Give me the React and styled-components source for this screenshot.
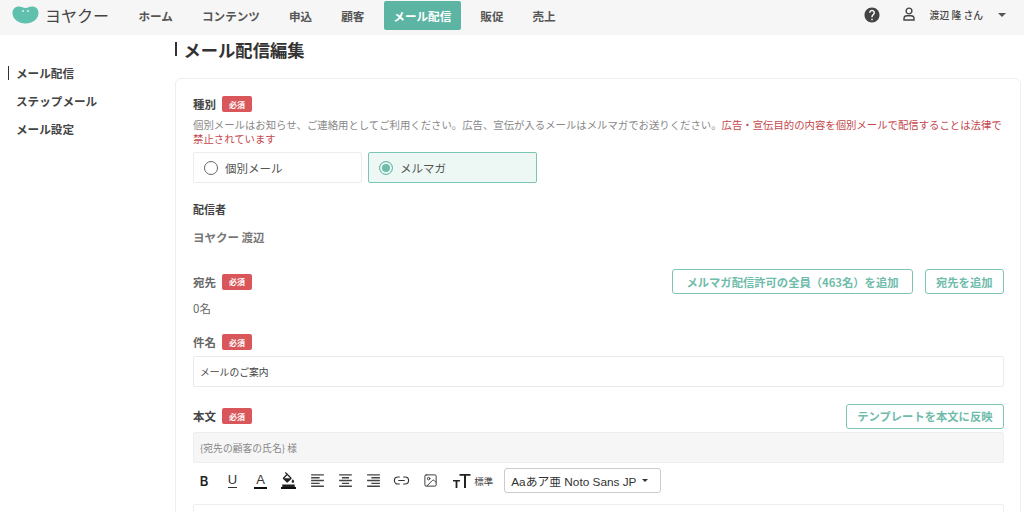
import React from "react";
import styled, { createGlobalStyle } from "styled-components";
import { MdHelp, MdFormatColorFill, MdFormatAlignLeft, MdFormatAlignCenter, MdFormatAlignRight } from "react-icons/md";
import { Link2, Image } from "lucide-react";

const GlobalStyle = createGlobalStyle`
  html, body {
    margin: 0;
    background: #fff;
  }
  body {
    font-family: "Noto Sans CJK JP", "Noto Sans", sans-serif;
    color: #333;
  }
  * { box-sizing: border-box; }
`;

const NAV = ["ホーム", "コンテンツ", "申込", "顧客", "メール配信", "販促", "売上"];
const SIDE = ["メール配信", "ステップメール", "メール設定"];

function App() {
  return (
    <Page>
      <GlobalStyle />
      <Header>
        <Logo>
          <svg width="27" height="18" viewBox="0 0 27 18">
            <path d="M7 0.5C10 0.5 11 2 13.5 2C16 2 17 0.5 20 0.5C24 0.5 26.5 3 26.5 7C26.5 13 20.5 17.5 13.5 17.5C6.5 17.5 0.5 13 0.5 7C0.5 3 3 0.5 7 0.5Z" fill="#5fc0ae" />
            <circle cx="11" cy="5" r="1.1" fill="#d4eee8" />
            <circle cx="16" cy="5" r="1.1" fill="#d4eee8" />
          </svg>
          <LogoText>ヨヤクー</LogoText>
        </Logo>
        <Nav>
          {NAV.map((n) => (
            <NavItem key={n} $active={n === "メール配信"}>{n}</NavItem>
          ))}
        </Nav>
        <UserArea>
          <MdHelp size={18} color="#444" />
          <UserIcon width="14" height="14" viewBox="0 0 14 14" fill="none" stroke="#444" strokeWidth="1.4">
            <circle cx="7" cy="4" r="2.9" />
            <path d="M2 13V11.5C2 9.8 3.2 8.8 5 8.8H9C10.8 8.8 12 9.8 12 11.5V13Z" />
          </UserIcon>
          <UserName>渡辺 隆 さん</UserName>
          <Caret />
        </UserArea>
      </Header>
      <Body>
        <Sidebar>
          {SIDE.map((s, i) => (
            <SideItem key={s} $active={i === 0}>{s}</SideItem>
          ))}
        </Sidebar>
        <Main>
          <Title>メール配信編集</Title>
          <Card>
            <LabelRow>
              <Label>種別</Label>
              <Badge>必須</Badge>
            </LabelRow>
            <Note>
              個別メールはお知らせ、ご連絡用としてご利用ください。広告、宣伝が入るメールはメルマガでお送りください。
              <Warn>広告・宣伝目的の内容を個別メールで配信することは法律で禁止されています</Warn>
            </Note>
            <RadioRow>
              <RadioBox>
                <RadioDot />
                個別メール
              </RadioBox>
              <RadioBox $checked>
                <RadioDot $checked />
                メルマガ
              </RadioBox>
            </RadioRow>
            <SenderLabel>配信者</SenderLabel>
            <SenderName>ヨヤクー 渡辺</SenderName>
            <ToRow>
              <LabelRow>
                <Label $soft>宛先</Label>
                <Badge>必須</Badge>
              </LabelRow>
              <Actions>
                <OutlineButton $wide>メルマガ配信許可の全員（463名）を追加</OutlineButton>
                <OutlineButton>宛先を追加</OutlineButton>
              </Actions>
            </ToRow>
            <Count>0名</Count>
            <SubjectLabel>
              <Label $soft>件名</Label>
              <Badge>必須</Badge>
            </SubjectLabel>
            <TextInput>メールのご案内</TextInput>
            <BodyRow>
              <LabelRow>
                <Label>本文</Label>
                <Badge>必須</Badge>
              </LabelRow>
              <OutlineButton>テンプレートを本文に反映</OutlineButton>
            </BodyRow>
            <Prefill>{"{宛先の顧客の氏名} 様"}</Prefill>
            <Toolbar>
              <ToolButton><LetterB>B</LetterB></ToolButton>
              <ToolButton><LetterU>U</LetterU></ToolButton>
              <ToolButton><LetterA>A</LetterA></ToolButton>
              <ToolButton><Bucket><MdFormatColorFill size={15} color="#222" /></Bucket></ToolButton>
              <ToolButton><MdFormatAlignLeft size={17} color="#444" /></ToolButton>
              <ToolButton><MdFormatAlignCenter size={17} color="#444" /></ToolButton>
              <ToolButton><MdFormatAlignRight size={17} color="#444" /></ToolButton>
              <ToolButton><Link2 size={17} color="#333" strokeWidth={1.6} /></ToolButton>
              <ToolButton><Image size={15} color="#333" strokeWidth={1.5} /></ToolButton>
              <SizeControl>
                <svg width="18" height="14" viewBox="0 0 18 14" fill="#222">
                  <path d="M0 6H7V7.6H4.4V14H2.6V7.6H0Z" />
                  <path d="M6.5 0H17.5V1.8H13V14H11V1.8H6.5Z" />
                </svg>
                <SizeText>標準</SizeText>
              </SizeControl>
              <FontSelect>
                Aaあア亜 Noto Sans JP
                <SelectCaret />
              </FontSelect>
            </Toolbar>
            <Editor />
          </Card>
        </Main>
      </Body>
    </Page>
  );
}

const Page = styled.div`
  height: 512px;
  overflow: hidden;
`;

const Header = styled.header`
  height: 35px;
  background: #f6f6f6;
  display: flex;
  align-items: flex-start;
  padding-left: 12px;
`;

const Logo = styled.div`
  width: 117px;
  height: 29px;
  display: flex;
  align-items: center;
  gap: 6px;
`;

const LogoText = styled.span`
  font-size: 16px;
  font-weight: 400;
  color: #444;
`;

const Nav = styled.nav`
  display: flex;
  align-items: center;
  padding-top: 1px;
  gap: 10px;
`;

const NavItem = styled.div`
  height: 29px;
  padding: 0 9.5px;
  display: flex;
  align-items: center;
  font-size: 11.6px;
  font-weight: 700;
  border-radius: 2px;
  color: ${(p) => (p.$active ? "#fff" : "#555")};
  background: ${(p) => (p.$active ? "#5cb5a3" : "transparent")};
`;

const UserArea = styled.div`
  margin-left: auto;
  height: 30px;
  display: flex;
  align-items: center;
  padding-right: 18px;
`;

const UserIcon = styled.svg`
  margin-left: 21px;
  margin-top: -3px;
`;

const UserName = styled.span`
  margin-left: 14px;
  font-size: 9.8px;
  font-weight: 500;
  color: #444;
`;

const Caret = styled.i`
  margin-left: 15px;
  width: 0;
  height: 0;
  border-left: 4px solid transparent;
  border-right: 4px solid transparent;
  border-top: 4px solid #555;
`;

const Body = styled.div`
  display: flex;
`;

const Sidebar = styled.aside`
  width: 175px;
  flex: none;
  padding-top: 28px;
  padding-left: 8px;
  display: flex;
  flex-direction: column;
  gap: 9px;
`;

const SideItem = styled.div`
  height: 19px;
  display: flex;
  align-items: center;
  font-size: 11.6px;
  font-weight: 700;
  color: #444;

  &::before {
    content: "";
    width: 1px;
    height: 14px;
    margin-right: 7px;
    background: ${(p) => (p.$active ? "#333" : "transparent")};
  }
`;

const Main = styled.main`
  flex: 1;
  padding-right: 3px;
`;

const Title = styled.h1`
  margin: 6px 0 0;
  height: 16px;
  display: flex;
  align-items: center;
  font-size: 17.3px;
  font-weight: 700;
  color: #333;

  &::before {
    content: "";
    width: 2px;
    height: 14px;
    margin-right: 6.5px;
    align-self: flex-start;
    margin-top: 1px;
    background: #333;
  }
`;

const Card = styled.section`
  margin-top: 21px;
  height: 500px;
  padding: 17px 16px 0 17px;
  background: #fff;
  border: 1px solid #eeeeee;
  border-radius: 6px;
`;

const LabelRow = styled.div`
  display: flex;
  align-items: center;
  gap: 6px;
  height: 16px;
`;

const Label = styled.span`
  font-size: 11.5px;
  font-weight: 700;
  color: ${(p) => (p.$soft ? "#666" : "#444")};
`;

const Badge = styled.span`
  width: 30px;
  height: 16px;
  display: flex;
  align-items: center;
  justify-content: center;
  font-size: 8px;
  font-weight: 700;
  color: #fff;
  background: #d9575b;
  border-radius: 2px;
`;

const Note = styled.p`
  margin: 6px 0 0;
  font-size: 10.39px;
  line-height: 14px;
  color: #888;
`;

const Warn = styled.span`
  color: #c5474c;
`;

const RadioRow = styled.div`
  margin-top: 6px;
  display: flex;
  gap: 6px;
`;

const RadioBox = styled.div`
  width: 169px;
  height: 31px;
  padding-left: 10px;
  display: flex;
  align-items: center;
  gap: 7px;
  font-size: 11.5px;
  color: #555;
  border: 1px solid ${(p) => (p.$checked ? "#7cc4b4" : "#ececec")};
  border-radius: 2px;
  background: ${(p) => (p.$checked ? "#edf8f5" : "#fff")};
`;

const RadioDot = styled.i`
  width: 14px;
  height: 14px;
  border-radius: 50%;
  border: 1.5px solid ${(p) => (p.$checked ? "#6fbcab" : "#666")};
  background: ${(p) => (p.$checked ? "#6fbcab" : "transparent")};
  box-shadow: ${(p) => (p.$checked ? "inset 0 0 0 2px #edf8f5" : "none")};
`;

const SenderLabel = styled.div`
  margin-top: 17px;
  font-size: 11px;
  line-height: 18px;
  font-weight: 700;
  color: #444;
`;

const SenderName = styled.div`
  margin-top: 10px;
  font-size: 11.5px;
  line-height: 18px;
  font-weight: 700;
  color: #777;
`;

const ToRow = styled.div`
  margin-top: 23px;
  display: flex;
  align-items: center;
  justify-content: space-between;
`;

const Actions = styled.div`
  display: flex;
  gap: 12px;
`;

const OutlineButton = styled.button`
  height: 25px;
  padding: 0 ${(p) => (p.$wide ? "13px" : "10.5px")};
  font-family: inherit;
  font-size: 11.3px;
  font-weight: 700;
  color: #6fbcab;
  background: #fff;
  border: 1px solid #7cc4b4;
  border-radius: 3px;
`;

const Count = styled.div`
  margin-top: 5px;
  font-size: 11.5px;
  line-height: 18px;
  color: #666;
`;

const SubjectLabel = styled(LabelRow)`
  margin-top: 17px;
`;

const TextInput = styled.div`
  margin-top: 6px;
  height: 31px;
  padding-left: 6px;
  display: flex;
  align-items: center;
  font-size: 9.8px;
  color: #444;
  border: 1px solid #eaeaea;
  border-radius: 2px;
`;

const BodyRow = styled.div`
  margin-top: 16px;
  height: 26px;
  display: flex;
  align-items: center;
  justify-content: space-between;
`;

const Prefill = styled.div`
  margin-top: 3px;
  height: 31px;
  padding-left: 6px;
  display: flex;
  align-items: center;
  font-size: 9.8px;
  color: #888;
  background: #f6f6f6;
  border: 1px solid #eeeeee;
  border-radius: 2px;
`;

const Toolbar = styled.div`
  margin-top: 5px;
  height: 25px;
  display: flex;
  align-items: center;
`;

const ToolButton = styled.div`
  width: 28.25px;
  height: 25px;
  display: flex;
  align-items: center;
  justify-content: center;
  &:first-child { margin-left: -3px; }
`;

const LetterB = styled.span`
  font-family: "Inter", sans-serif;
  font-size: 13px;
  font-weight: 600;
  color: #222;
`;

const LetterU = styled.span`
  font-family: "Liberation Sans", sans-serif;
  font-size: 13px;
  line-height: 14px;
  color: #333;
  border-bottom: 1px solid #333;
`;

const LetterA = styled.span`
  font-family: "Liberation Sans", sans-serif;
  font-size: 13px;
  line-height: 14px;
  color: #333;
  border-bottom: 2px solid #111;
  padding: 0 2px;
`;

const Bucket = styled.span`
  display: flex;
  height: 17px;
  border-bottom: 2px solid #111;
`;

const SizeControl = styled.div`
  margin-left: 9px;
  width: 48px;
  display: flex;
  align-items: center;
  gap: 3px;
`;

const SizeText = styled.span`
  font-size: 9.5px;
  color: #444;
`;

const FontSelect = styled.div`
  margin-left: 3px;
  width: 157px;
  height: 25px;
  padding-left: 6px;
  display: flex;
  align-items: center;
  font-family: "Liberation Sans", "Noto Sans CJK JP", sans-serif;
  font-size: 11.8px;
  color: #333;
  border: 1px solid #ccc;
  border-radius: 3px;
`;

const SelectCaret = styled.i`
  margin-left: 6px;
  width: 0;
  height: 0;
  border-left: 3px solid transparent;
  border-right: 3px solid transparent;
  border-top: 3px solid #333;
`;

const Editor = styled.div`
  margin-top: 11px;
  height: 100px;
  border: 1px solid #eeeeee;
  border-radius: 2px;
`;

export default App;
